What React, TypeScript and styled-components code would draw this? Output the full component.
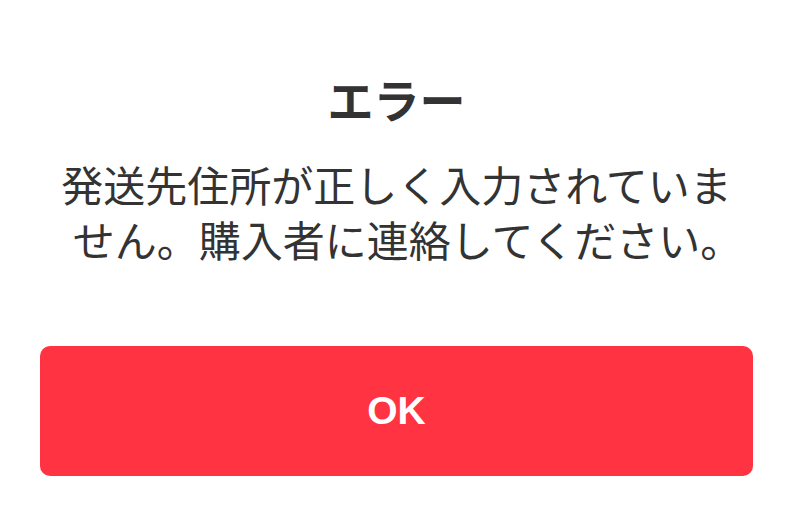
import React from 'react';
import styled, { createGlobalStyle } from 'styled-components';

const GlobalStyle = createGlobalStyle`
    html, body {
        margin: 0;
        padding: 0;
        background: #fff;
    }
    body {
        font-family: 'Noto Sans CJK JP', 'Noto Sans', sans-serif;
        color: #333;
    }
`;

const Dialog = styled.div`
    width: 794px;
    height: 511px;
    box-sizing: border-box;
    padding: 66px 41px 0 40px;
    display: flex;
    flex-direction: column;
    align-items: stretch;
    background: #fff;
`;

const Title = styled.h1`
    margin: 0;
    font-size: 46px;
    line-height: 64px;
    font-weight: 700;
    text-align: center;
    color: #333;
`;

const Message = styled.p`
    margin: 26px 0 0;
    padding: 0 12px;
    font-size: 42px;
    line-height: 55px;
    font-weight: 400;
    text-align: center;
    color: #333;
`;

// line-end full stop takes half its width, like the reference
const EndMark = styled.span`
    letter-spacing: -22px;
`;

const OkButton = styled.button`
    margin-top: 80px;
    height: 130px;
    border: none;
    border-radius: 10px;
    background: #ff3341;
    color: #fff;
    font-family: 'Liberation Sans', Arial, sans-serif;
    font-size: 39px;
    font-weight: 700;
    cursor: pointer;
`;

export default function App() {
    return <>
        <GlobalStyle />
        <Dialog>
            <Title>エラー</Title>
            <Message>発送先住所が正しく入力されていません。購入者に連絡してください<EndMark>。</EndMark></Message>
            <OkButton>OK</OkButton>
        </Dialog>
    </>;
}
